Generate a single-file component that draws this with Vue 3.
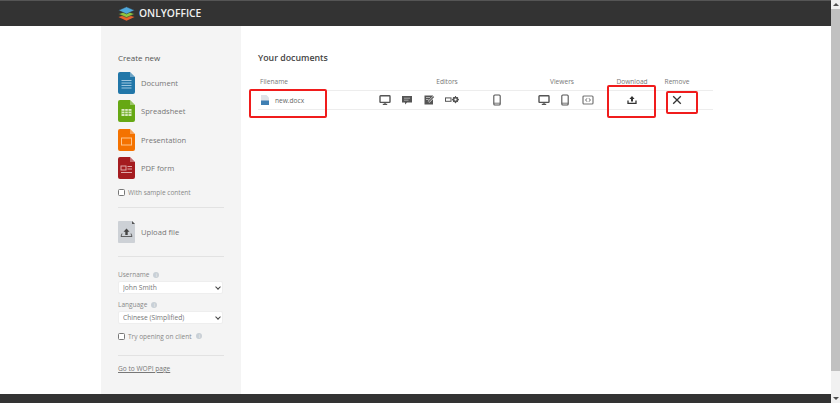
<template>
  <div class="page">
    <div class="main-col">
      <header class="top">
        <div class="logo">
          <svg width="17" height="15" viewBox="0 0 19 16">
            <path d="M9.5 9.5 L18.5 12 L9.5 16 L0.5 12 Z" fill="#e8622c" />
            <path d="M9.5 5.5 L18.5 8.5 L9.5 12.5 L0.5 8.5 Z" fill="#8ec641" stroke="#333" stroke-width=".6" />
            <path d="M9.5 0.5 L18.5 4.5 L9.5 8.5 L0.5 4.5 Z" fill="#4fa8dc" stroke="#333" stroke-width=".6" />
          </svg>
          <span class="logo-text">ONLYOFFICE</span>
        </div>
      </header>

      <div class="body">
        <aside class="side">
          <div class="side-title">Create new</div>
          <a v-for="t in creators" :key="t.name" class="create-item">
            <svg width="17" height="22" viewBox="0 0 17 22">
              <path d="M2 0 H12 L17 5 V20 a2 2 0 0 1 -2 2 H2 a2 2 0 0 1 -2 -2 V2 a2 2 0 0 1 2 -2 Z" :fill="t.color" />
              <path d="M12 0 L17 5 H12 Z" fill="#fff" opacity=".35" />
              <g v-if="t.kind === 'doc'" stroke="#9cc6e0" stroke-width="1">
                <path d="M3.5 8.5 H13.5 M3.5 11 H13.5 M3.5 13.5 H13.5 M3.5 16 H13.5" />
              </g>
              <g v-if="t.kind === 'sheet'">
                <rect x="3.5" y="9" width="10" height="7" fill="#d9ecc0" />
                <path d="M3.5 11.3 H13.5 M3.5 13.6 H13.5 M6.8 9 V16 M10.2 9 V16" stroke="#6aa81e" stroke-width=".7" />
              </g>
              <rect v-if="t.kind === 'slide'" x="3.5" y="9" width="10" height="7" fill="none" stroke="#ffc48a" stroke-width="1" />
              <g v-if="t.kind === 'pdf'" stroke="#e0a9a9" stroke-width="1" fill="none">
                <rect x="3" y="9" width="5" height="4" />
                <path d="M3 15.5 H14 M9.5 9.5 H14 M9.5 12 H14" />
              </g>
            </svg>
            <span>{{ t.name }}</span>
          </a>
          <label class="check first">
            <input type="checkbox" />
            <span>With sample content</span>
          </label>
          <div class="sep sep-a"></div>
          <a class="upload">
            <svg width="17" height="22" viewBox="0 0 17 22">
              <path d="M1 0 H14 L17 3 V21 a1 1 0 0 1 -1 1 H1 a1 1 0 0 1 -1 -1 V1 a1 1 0 0 1 1 -1 Z" fill="#cdd1d6" />
              <path d="M14 0 L17 3 H14 Z" fill="#555" />
              <path d="M8.5 7.5 L11.5 10.8 H9.7 V14 H7.3 V10.8 H5.5 Z" fill="#444" />
              <path d="M4 12.5 L3 15.5 H14 L13 12.5" fill="none" stroke="#444" stroke-width=".8" />
            </svg>
            <span>Upload file</span>
          </a>
          <div class="sep sep-b"></div>
          <div class="field-label">Username <i class="info">i</i></div>
          <div class="sel-wrap">
            <select class="sel">
              <option>John Smith</option>
            </select>
          </div>
          <div class="field-label second">Language <i class="info">i</i></div>
          <div class="sel-wrap">
            <select class="sel">
              <option>Chinese (Simplified)</option>
            </select>
          </div>
          <label class="check client">
            <input type="checkbox" />
            <span>Try opening on client</span>
            <i class="info">i</i>
          </label>
          <div class="sep sep-c"></div>
          <a class="wopi">Go to WOPI page</a>
        </aside>

        <main class="docs">
          <h2 class="docs-title">Your documents</h2>
          <div class="heads">
            <span class="h-file">Filename</span>
            <span class="center">Editors</span>
            <span class="center">Viewers</span>
            <span class="center">Download</span>
            <span class="center">Remove</span>
          </div>
          <div class="row">
            <div class="file">
              <svg width="8" height="10" viewBox="0 0 8 10">
                <path d="M0 0 H5.5 L8 2.5 V10 H0 Z" fill="#dfe3e8" />
                <rect y="5.5" width="8" height="4.5" fill="#3f7fb3" />
              </svg>
              <span>new.docx</span>
            </div>
            <div class="icons editors">
              <svg v-for="i in editorIcons" :key="i.id" :class="'ic-' + i.id" :viewBox="`0 0 ${i.w} 12`" :width="i.w" height="12">
                <use :href="'#' + i.id" />
              </svg>
            </div>
            <div class="icons viewers">
              <svg v-for="i in viewerIcons" :key="i" :class="'ic-' + i" viewBox="0 0 12 12" width="12" height="12">
                <use :href="'#' + i" />
              </svg>
            </div>
            <div class="cell">
              <svg width="12" height="12" viewBox="0 0 12 12">
                <path d="M6 2 L8.6 4.9 H7 V7.6 H5 V4.9 H3.4 Z" fill="#333" />
                <path d="M2 6.5 V9.3 H10 V6.5" fill="none" stroke="#333" stroke-width="1.3" />
              </svg>
            </div>
            <div class="cell">
              <svg width="12" height="12" viewBox="0 0 12 12">
                <path d="M2.2 2.2 L9.8 9.8 M9.8 2.2 L2.2 9.8" stroke="#333" stroke-width="1.3" />
              </svg>
            </div>
          </div>
        </main>
      </div>

      <footer class="bottom"></footer>
    </div>

    <div class="scrollbar">
      <span class="arrow up"></span>
      <div class="thumb"></div>
      <span class="arrow down"></span>
    </div>

    <!-- annotation boxes drawn over the screenshot -->
    <div class="mark m1"></div>
    <div class="mark m2"></div>
    <div class="mark m3"></div>

    <svg width="0" height="0" class="defs">
      <defs>
        <g id="desktop">
          <rect x="1" y="1.8" width="10" height="6.6" rx=".6" fill="none" stroke="#555" stroke-width="1.4" />
          <path d="M3.8 10.4 H8.2 M6 8.5 V10.4" stroke="#555" stroke-width="1.3" />
        </g>
        <g id="comment">
          <path d="M1 2 H11 V8.6 H6 L4 10.6 V8.6 H1 Z" fill="#555" />
          <path d="M3 4.2 H9 M3 6.2 H7.5" stroke="#ccc" stroke-width=".7" />
        </g>
        <g id="review">
          <path d="M1.5 1.5 H10 V10.5 H1.5 Z" fill="#555" />
          <path d="M3 3.5 H7 M3 5.5 H5.5" stroke="#ddd" stroke-width=".7" />
          <path d="M5.5 8 L10.8 2.7" stroke="#fff" stroke-width="2.2" />
          <path d="M5.5 8 L10.8 2.7" stroke="#555" stroke-width="1.1" />
        </g>
        <g id="fill">
          <rect x="0.5" y="3.9" width="5.5" height="3.4" fill="none" stroke="#555" stroke-width="1" />
          <circle cx="10.5" cy="5.6" r="2.2" fill="none" stroke="#555" stroke-width="1.5" />
          <path d="M10.5 2 V9.2 M6.9 5.6 H14 M8 3.1 L13 8.1 M13 3.1 L8 8.1" stroke="#555" stroke-width="1" />
          <circle cx="10.5" cy="5.6" r="1.1" fill="#fff" />
        </g>
        <g id="mobile">
          <rect x="2.8" y="1" width="6.4" height="10" rx="1" fill="none" stroke="#555" stroke-width="1.1" />
          <path d="M2.8 9.2 H9.2" stroke="#555" stroke-width=".8" />
        </g>
        <g id="embed">
          <rect x="1" y="2" width="10" height="8" rx="1" fill="none" stroke="#777" stroke-width="1.2" />
          <path d="M5 4.3 L3.6 6 L5 7.7 M7 4.3 L8.4 6 L7 7.7" fill="none" stroke="#555" stroke-width=".9" />
        </g>
      </defs>
    </svg>
  </div>
</template>

<script setup>
const creators = [
  { name: 'Document', kind: 'doc', color: '#2176a8' },
  { name: 'Spreadsheet', kind: 'sheet', color: '#66a814' },
  { name: 'Presentation', kind: 'slide', color: '#f47200' },
  { name: 'PDF form', kind: 'pdf', color: '#a51c20' }
]
const editorIcons = [
  { id: 'desktop', w: 12 },
  { id: 'comment', w: 12 },
  { id: 'review', w: 12 },
  { id: 'fill', w: 14 },
  { id: 'mobile', w: 12 }
]
const viewerIcons = ['desktop', 'mobile', 'embed']
</script>

<style>
html, body {
  margin: 0;
  overflow: hidden;
}
</style>

<style scoped>
.page {
  position: relative;
  display: flex;
  width: 840px;
  height: 403px;
  overflow: hidden;
  background: #fff;
  font-family: "Open Sans", "Liberation Sans", sans-serif;
  color: #666;
}

.main-col {
  width: 831px;
  display: flex;
  flex-direction: column;
}

.top {
  height: 26px;
  flex-shrink: 0;
  box-sizing: border-box;
  background: #333;
  border-top: 1px solid #555;
  padding-left: 118px;
}

.logo {
  display: flex;
  align-items: center;
  gap: 4px;
  height: 26px;
  margin-top: -1px;
}

.logo-text {
  font-size: 10.3px;
  font-weight: 600;
  color: #f0f0f0;
}

.body {
  flex: 1;
  display: flex;
  min-height: 0;
}

.bottom {
  height: 9px;
  flex-shrink: 0;
  background: #333;
}

/* sidebar */
.side {
  width: 140px;
  margin-left: 101px;
  box-sizing: border-box;
  padding: 26px 17px 0;
  background: #f4f4f4;
  display: flex;
  flex-direction: column;
}

.side-title {
  font-size: 8px;
  line-height: 12px;
  color: #555;
  margin-bottom: 8px;
}

.create-item,
.upload {
  display: flex;
  align-items: center;
  gap: 6px;
  height: 22px;
  margin-bottom: 6.4px;
  font-size: 7.6px;
  color: #777;
}

.check {
  display: flex;
  align-items: center;
  gap: 3px;
  font-size: 6.5px;
  color: #888;
  height: 12px;
}

.check input {
  appearance: none;
  box-sizing: border-box;
  width: 7px;
  height: 7px;
  margin: 0;
  border: 1px solid #777;
  border-radius: 1.5px;
  background: #fff;
}

.first {
  margin-top: 0.5px;
}

.sep {
  height: 1px;
  background: #e2e2e2;
  flex-shrink: 0;
}

.sep-a {
  margin-top: 9px;
  margin-bottom: 13px;
}

.upload {
  margin-bottom: 0;
}

.sep-b {
  margin-top: 13px;
  margin-bottom: 13px;
}

.field-label {
  font-size: 6.5px;
  line-height: 10px;
  color: #888;
  display: flex;
  align-items: center;
  gap: 4px;
  margin-bottom: 1px;
}

.second {
  margin-top: 6px;
}

.info {
  width: 6px;
  height: 6px;
  border-radius: 50%;
  background: #c9d0d6;
  color: #f4f4f4;
  font-size: 5px;
  line-height: 6px;
  font-style: normal;
  text-align: center;
}

.sel-wrap {
  position: relative;
  width: 105px;
  height: 13px;
}

.sel-wrap::after {
  content: "";
  position: absolute;
  right: 3px;
  top: 3.5px;
  width: 3px;
  height: 3px;
  border-right: 1px solid #444;
  border-bottom: 1px solid #444;
  transform: rotate(45deg);
}

.sel {
  appearance: none;
  display: block;
  width: 100%;
  height: 100%;
  box-sizing: border-box;
  border: 1px solid #eee;
  border-radius: 2px;
  background: #fff;
  font: 6.7px "Open Sans", sans-serif;
  color: #777;
  padding: 0 0 0 4px;
  outline: none;
}

.client {
  margin-top: 6px;
}

.client .info {
  margin-left: 2px;
}

.sep-c {
  margin-top: 13px;
  margin-bottom: 8px;
}

.wopi {
  font-size: 6.6px;
  line-height: 10px;
  color: #777;
  text-decoration: underline;
}

/* documents */
.docs {
  flex: 1;
  padding: 26px 0 0 17px;
  min-width: 0;
}

.docs-title {
  margin: 0 0 9px;
  font-size: 8.8px;
  line-height: 13px;
  font-weight: 600;
  color: #444;
}

.heads,
.row {
  display: grid;
  width: 455px;
  align-items: center;
  border-bottom: 1px solid #ededed;
}

.heads {
  grid-template-columns: 121px 136px 94px 46px 44px 14px;
  height: 14px;
  padding-bottom: 2px;
  font-size: 6.6px;
  color: #777;
}

.row {
  grid-template-columns: 121px 159px 64px 60px 30px 21px;
  height: 18px;
}

.h-file {
  padding-left: 2px;
}

.center {
  text-align: center;
  white-space: nowrap;
}

.file {
  display: flex;
  align-items: center;
  gap: 6px;
  padding-left: 3px;
  font-size: 6.6px;
  color: #666;
}

.icons {
  display: flex;
  align-items: center;
}

.editors {
  gap: 10px;
}

.editors .ic-fill {
  margin-right: 22px;
}

.viewers {
  gap: 9px;
}

.viewers .ic-embed {
  margin-left: 2px;
}

.cell {
  display: flex;
  justify-content: center;
  align-items: center;
}

/* scrollbar */
.scrollbar {
  width: 9px;
  height: 403px;
  flex-shrink: 0;
  background: #f1f1f1;
  display: flex;
  flex-direction: column;
  align-items: center;
}

.thumb {
  width: 100%;
  height: 362px;
  flex-shrink: 0;
  background: #c1c1c1;
}

.arrow {
  width: 0;
  height: 0;
  margin: 3px 0;
  border-left: 3px solid transparent;
  border-right: 3px solid transparent;
}

.up {
  border-bottom: 3px solid #505050;
}

.down {
  margin-top: auto;
  border-top: 3px solid #505050;
}

/* annotations */
.mark {
  position: absolute;
  border: 2px solid #f01c1c;
  border-radius: 2px;
  box-sizing: border-box;
}

.m1 {
  left: 249px;
  top: 89px;
  width: 78px;
  height: 29px;
}

.m2 {
  left: 607px;
  top: 85px;
  width: 49px;
  height: 33px;
}

.m3 {
  left: 666px;
  top: 91px;
  width: 32px;
  height: 23px;
}

.defs {
  position: absolute;
}
</style>
